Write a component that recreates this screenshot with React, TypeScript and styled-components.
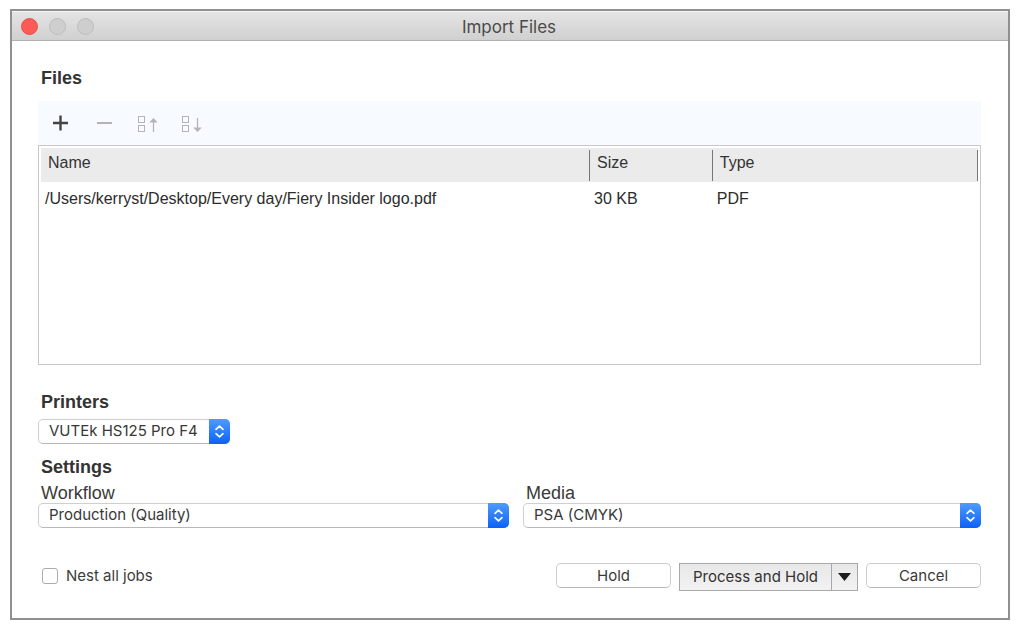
import React from "react";
import styled, { createGlobalStyle } from "styled-components";

const GlobalStyle = createGlobalStyle`
  *, *::before, *::after { box-sizing: border-box; }
  body {
    margin: 0;
    background: #fff;
    color: #333;
    font-family: "Liberation Sans", Arial, sans-serif;
    font-size: 17px;
    line-height: 20px;
  }
`;

const systemFont = `Inter, "Liberation Sans", sans-serif`;

const Page = styled.div`
  display: flex;
  min-height: 100vh;
  padding: 9px 14px 7px 10px;
`;

const Window = styled.main`
  flex: 1;
  min-width: 0;
  display: flex;
  flex-direction: column;
  border: 2px solid #909090;
`;

const TitleBar = styled.header`
  display: grid;
  grid-template-columns: 1fr auto 1fr;
  align-items: center;
  height: 30px;
  padding: 1px 11px 0 9px;
  border-top: 1px solid #f4f4f4;
  border-bottom: 1px solid #b0b0b0;
  background: linear-gradient(#e4e4e4, #d0d0d0);
`;

const WindowControls = styled.div`
  display: flex;
  gap: 11px;
`;

const WindowControl = styled.button<{ $active?: boolean }>`
  width: 17px;
  height: 17px;
  padding: 0;
  border-radius: 50%;
  border: 1px solid ${(p) => (p.$active ? "#e8504a" : "#bdbdbd")};
  background: ${(p) => (p.$active ? "#fd5b55" : "#cecece")};
`;

const WindowTitle = styled.h1`
  margin: 0;
  font: 400 17px/20px ${systemFont};
  color: #4a4a4a;
`;

const Content = styled.div`
  flex: 1;
  display: flex;
  flex-direction: column;
  padding: 27px 27px 27px 26px;
`;

const Heading = styled.h2`
  margin: 0;
  padding-left: 3px;
  font-size: 18px;
  line-height: 20px;
  font-weight: 700;
  color: #333;
`;

const Toolbar = styled.div`
  display: flex;
  align-items: center;
  gap: 20px;
  height: 44px;
  margin-top: 13px;
  padding: 0 10px;
  background: #f7fbff;
`;

const ToolButton = styled.button`
  display: flex;
  width: 24px;
  height: 24px;
  padding: 0;
  border: 0;
  background: none;
  color: #b4b4b8;
  &:enabled { color: #444; }
`;

const TableFrame = styled.div`
  flex: 1;
  min-height: 180px;
  padding: 2px;
  border: 1px solid #c8c8c8;
`;

const FileTable = styled.table`
  width: 100%;
  table-layout: fixed;
  border-collapse: separate;
  border-spacing: 0;
  font-size: 16px;
  line-height: 20px;
`;

const ColumnHead = styled.th<{ $width?: string }>`
  width: ${(p) => p.$width ?? "auto"};
  height: 34px;
  padding: 0;
  text-align: left;
  font-weight: 400;
  color: #333;
  background: #ebebeb;
`;

const HeadLabel = styled.div`
  height: 31px;
  margin-top: 1px;
  padding: 3px 7px;
  border-right: 1px solid #777;
`;

const Cell = styled.td`
  height: 34px;
  padding: 0 4px;
  color: #2c2c2c;
`;

const PrinterSection = styled.section`
  display: flex;
  flex-direction: column;
  align-items: flex-start;
  gap: 7px;
  margin-top: 27px;
`;

const SettingsSection = styled.section`
  margin-top: 13px;
`;

const SettingsRow = styled.div`
  display: grid;
  grid-template-columns: 471fr 458fr;
  gap: 14px;
  margin-top: 6px;
`;

const Field = styled.div`
  display: flex;
  flex-direction: column;
`;

const FieldLabel = styled.label`
  padding-left: 3px;
  font-size: 18px;
  color: #3a3a3a;
`;

const SelectFrame = styled.div<{ $width?: string }>`
  display: grid;
  grid-template-columns: 1fr 21px;
  width: ${(p) => p.$width ?? "100%"};
  height: 25px;
`;

const NativeSelect = styled.select`
  grid-area: 1 / 1 / 2 / 3;
  min-width: 0;
  padding: 0 24px 1px 10px;
  appearance: none;
  border: 1px solid #cfcfcf;
  border-bottom-color: #b8b8b8;
  border-radius: 5px;
  background: #fff;
  font: 400 15px/20px ${systemFont};
  color: #383838;
`;

const Stepper = styled.span`
  grid-area: 1 / 2 / 2 / 3;
  z-index: 1;
  display: flex;
  align-items: center;
  justify-content: center;
  border-radius: 0 5px 5px 0;
  background: linear-gradient(#4f9bfb, #0c62f8);
  pointer-events: none;
`;

const Footer = styled.footer`
  display: flex;
  align-items: flex-start;
  justify-content: space-between;
  margin-top: 35px;
`;

const CheckLabel = styled.label`
  display: flex;
  align-items: center;
  gap: 8px;
  height: 25px;
  padding-left: 4px;
  font: 400 15px/20px ${systemFont};
  color: #3c3c3c;
`;

const CheckBox = styled.input`
  width: 16px;
  height: 16px;
  margin: 0;
  appearance: none;
  border: 1px solid #ababab;
  border-radius: 3px;
  background: #fff;
  &:checked { background: #1a6efb; }
`;

const Actions = styled.div`
  display: flex;
  gap: 8px;
`;

const PushButton = styled.button`
  width: 115px;
  height: 25px;
  padding: 0;
  border: 1px solid #cdcdcd;
  border-bottom-color: #b8b8b8;
  border-radius: 5px;
  background: #fff;
  font: 400 15px/20px ${systemFont};
  color: #3a3a3a;
`;

const SplitButton = styled.div`
  display: flex;
  height: 28px;
  border: 1px solid #a8a8a8;
  background: linear-gradient(#e8e8e8, #f2f2f2);
`;

const SplitMain = styled.button`
  width: 151px;
  padding: 0;
  border: 0;
  background: none;
  font: 400 15px/20px ${systemFont};
  color: #333;
`;

const SplitMenu = styled.button`
  display: flex;
  align-items: center;
  justify-content: center;
  width: 26px;
  padding: 0;
  border: 0;
  border-left: 1px solid #a8a8a8;
  background: none;
`;

function SortIcon({ down }: { down?: boolean }) {
  return (
    <svg width="24" height="24" viewBox="0 0 24 24" fill="none" stroke="currentColor">
      <rect x="2.5" y="5.5" width="6" height="6" />
      <rect x="2.5" y="14.5" width="6" height="6" />
      <path d="M17.5 8v13" strokeWidth="1.3" transform={down ? "rotate(180 17.5 14)" : undefined} />
      <path
        d="M13.3 11.5 17.5 7l4.2 4.5z"
        fill="currentColor"
        stroke="none"
        transform={down ? "rotate(180 17.5 14)" : undefined}
      />
    </svg>
  );
}

function PopUp({ id, label, value, width }: { id: string; label?: string; value: string; width?: string }) {
  return (
    <SelectFrame $width={width}>
      <NativeSelect id={id} aria-label={label} defaultValue={value}>
        <option>{value}</option>
      </NativeSelect>
      <Stepper aria-hidden="true">
        <svg width="13" height="17" viewBox="0 0 13 17" fill="none" stroke="#fff" strokeWidth="1.7" strokeLinecap="round" strokeLinejoin="round">
          <path d="M3 6.3 6.5 3.2 10 6.3M3 10.7l3.5 3.1L10 10.7" />
        </svg>
      </Stepper>
    </SelectFrame>
  );
}

const files = [{ name: "/Users/kerryst/Desktop/Every day/Fiery Insider logo.pdf", size: "30 KB", type: "PDF" }];

export default function App() {
  return (
    <>
      <GlobalStyle />
      <Page>
        <Window>
          <TitleBar>
            <WindowControls>
              <WindowControl $active aria-label="Close" />
              <WindowControl disabled aria-label="Minimize" />
              <WindowControl disabled aria-label="Zoom" />
            </WindowControls>
            <WindowTitle>Import Files</WindowTitle>
          </TitleBar>
          <Content>
            <Heading>Files</Heading>
            <Toolbar>
              <ToolButton aria-label="Add file">
                <svg width="24" height="24" viewBox="0 0 24 24" stroke="currentColor" strokeWidth="2.4">
                  <path d="M5 12h15M12.5 4.5v15" />
                </svg>
              </ToolButton>
              <ToolButton disabled aria-label="Remove file">
                <svg width="24" height="24" viewBox="0 0 24 24" stroke="currentColor" strokeWidth="2">
                  <path d="M5 12h15" />
                </svg>
              </ToolButton>
              <ToolButton disabled aria-label="Move up">
                <SortIcon />
              </ToolButton>
              <ToolButton disabled aria-label="Move down">
                <SortIcon down />
              </ToolButton>
            </Toolbar>
            <TableFrame>
              <FileTable>
                <thead>
                  <tr>
                    <ColumnHead $width="58.6%"><HeadLabel>Name</HeadLabel></ColumnHead>
                    <ColumnHead $width="13.1%"><HeadLabel>Size</HeadLabel></ColumnHead>
                    <ColumnHead><HeadLabel>Type</HeadLabel></ColumnHead>
                  </tr>
                </thead>
                <tbody>
                  {files.map((file) => (
                    <tr key={file.name}>
                      <Cell>{file.name}</Cell>
                      <Cell>{file.size}</Cell>
                      <Cell>{file.type}</Cell>
                    </tr>
                  ))}
                </tbody>
              </FileTable>
            </TableFrame>
            <PrinterSection>
              <Heading>Printers</Heading>
              <PopUp id="printer" label="Printers" value="VUTEk HS125 Pro F4" width="192px" />
            </PrinterSection>
            <SettingsSection>
              <Heading>Settings</Heading>
              <SettingsRow>
                <Field>
                  <FieldLabel htmlFor="workflow">Workflow</FieldLabel>
                  <PopUp id="workflow" value="Production (Quality)" />
                </Field>
                <Field>
                  <FieldLabel htmlFor="media">Media</FieldLabel>
                  <PopUp id="media" value="PSA (CMYK)" />
                </Field>
              </SettingsRow>
            </SettingsSection>
            <Footer>
              <CheckLabel>
                <CheckBox type="checkbox" />
                Nest all jobs
              </CheckLabel>
              <Actions>
                <PushButton>Hold</PushButton>
                <SplitButton>
                  <SplitMain>Process and Hold</SplitMain>
                  <SplitMenu aria-label="More actions">
                    <svg width="13" height="8" viewBox="0 0 13 8">
                      <path d="M0 0h13L6.5 8z" fill="#1c1c1c" />
                    </svg>
                  </SplitMenu>
                </SplitButton>
                <PushButton>Cancel</PushButton>
              </Actions>
            </Footer>
          </Content>
        </Window>
      </Page>
    </>
  );
}
